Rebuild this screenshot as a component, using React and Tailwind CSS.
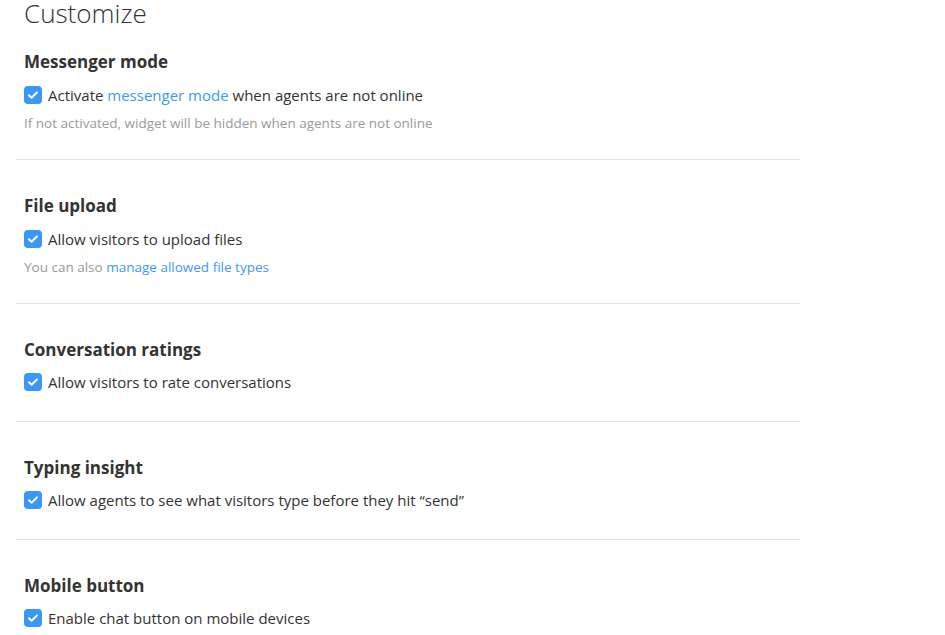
import React from "react";

const font = { fontFamily: "'Open Sans', Lato, sans-serif" };

function Check({ children }) {
  return (
    <label className="flex items-center gap-[6px] h-6 text-[15px] text-[#333]">
      <span className="flex items-center justify-center w-[18px] h-[18px] rounded-[4px] bg-[#3b97f6]">
        <svg width="12" height="12" viewBox="0 0 12 12" fill="none">
          <path d="M2 6.3l2.6 2.5 5.4-5.4" stroke="white" strokeWidth="2" strokeLinecap="round" strokeLinejoin="round" />
        </svg>
      </span>
      <span>{children}</span>
    </label>
  );
}

function Section({ title, first, last, tight, children }) {
  return (
    <div className={`${first ? "" : "border-t border-[#e4e4e4] pt-[34px]"} ${last ? "" : "pb-[27px]"}`}>
      <div className="px-2">
        <h2 className="h-6 leading-6 text-[17px] font-bold text-[#333]">{title}</h2>
        <div className={`${tight ? "mt-2" : "mt-[9px]"} flex flex-col gap-[7px]`}>{children}</div>
      </div>
    </div>
  );
}

export default function App() {
  return (
    <div className="bg-white min-h-screen" style={font}>
      <div className="w-[784px] ml-4">
        <h1 className="px-2 text-[26px] leading-[26px] font-light text-[#333] mb-[24px]">Customize</h1>
        <Section title="Messenger mode" first>
          <Check>
            Activate <span className="text-[#3d98f5]">messenger mode</span> when agents are not online
          </Check>
          <p className="h-[18px] leading-[18px] text-[13.5px] text-[#9a9a9a]">
            If not activated, widget will be hidden when agents are not online
          </p>
        </Section>
        <Section title="File upload">
          <Check>Allow visitors to upload files</Check>
          <p className="h-[18px] leading-[18px] text-[13.5px] text-[#9a9a9a]">
            You can also <span className="text-[#3d98f5]">manage allowed file types</span>
          </p>
        </Section>
        <Section title="Conversation ratings" tight>
          <Check>Allow visitors to rate conversations</Check>
        </Section>
        <Section title="Typing insight" tight>
          <Check>Allow agents to see what visitors type before they hit “send”</Check>
        </Section>
        <Section title="Mobile button" tight last>
          <Check>Enable chat button on mobile devices</Check>
        </Section>
      </div>
    </div>
  );
}
